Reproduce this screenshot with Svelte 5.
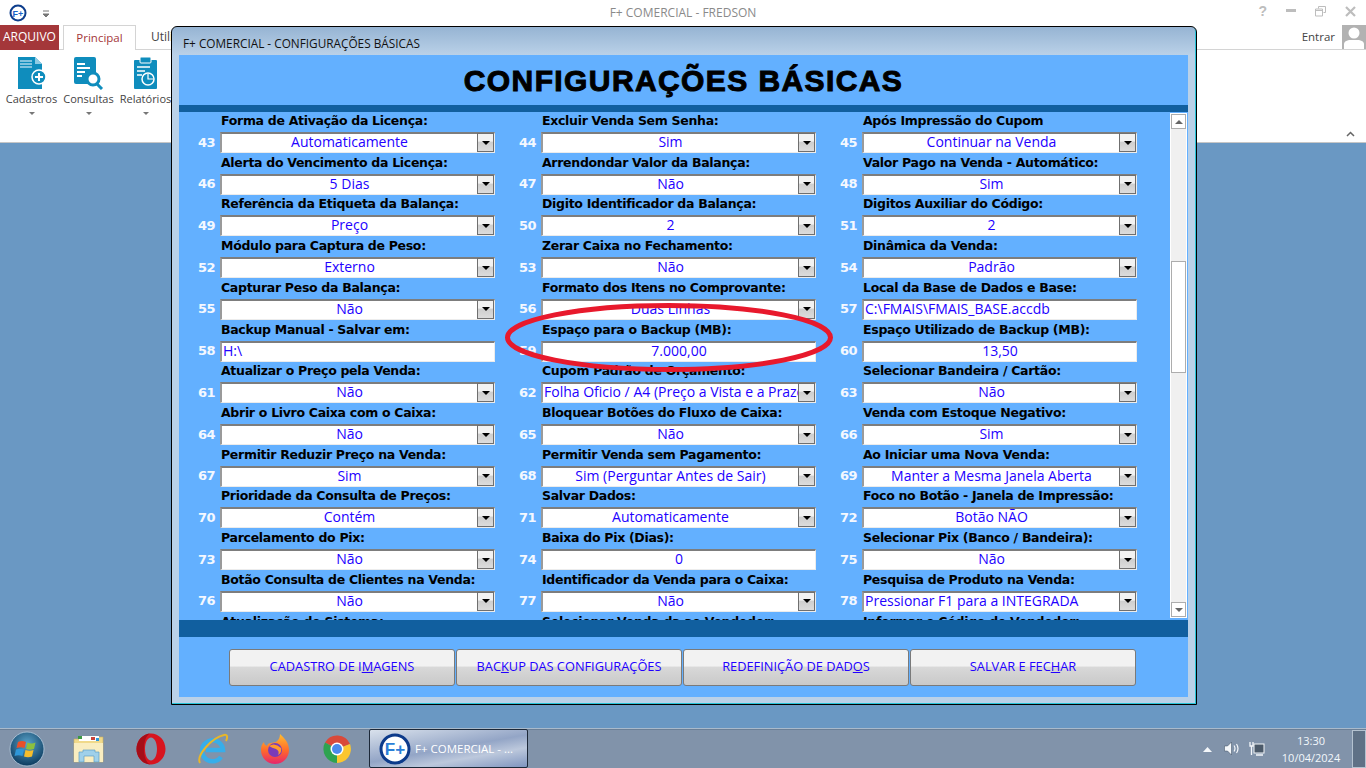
<script>
    const fields = [
        [43, 'Forma de Ativação da Licença:', 'Automaticamente', 'c'],
        [44, 'Excluir Venda Sem Senha:', 'Sim', 'c'],
        [45, 'Após Impressão do Cupom', 'Continuar na Venda', 'c'],
        [46, 'Alerta do Vencimento da Licença:', '5 Dias', 'c'],
        [47, 'Arrendondar Valor da Balança:', 'Não', 'c'],
        [48, 'Valor Pago na Venda - Automático:', 'Sim', 'c'],
        [49, 'Referência da Etiqueta da Balança:', 'Preço', 'c'],
        [50, 'Digito Identificador da Balança:', '2', 'c'],
        [51, 'Digitos Auxiliar do Código:', '2', 'c'],
        [52, 'Módulo para Captura de Peso:', 'Externo', 'c'],
        [53, 'Zerar Caixa no Fechamento:', 'Não', 'c'],
        [54, 'Dinâmica da Venda:', 'Padrão', 'c'],
        [55, 'Capturar Peso da Balança:', 'Não', 'c'],
        [56, 'Formato dos Itens no Comprovante:', 'Duas Linhas', 'c'],
        [57, 'Local da Base de Dados e Base:', 'C:\\FMAIS\\FMAIS_BASE.accdb', 'tl'],
        [58, 'Backup Manual - Salvar em:', 'H:\\', 'tl'],
        [59, 'Espaço para o Backup (MB):', '7.000,00', 't'],
        [60, 'Espaço Utilizado de Backup (MB):', '13,50', 't'],
        [61, 'Atualizar o Preço pela Venda:', 'Não', 'c'],
        [62, 'Cupom Padrão de Orçamento:', 'Folha Oficio / A4 (Preço a Vista e a Prazo)', 'cl'],
        [63, 'Selecionar Bandeira / Cartão:', 'Não', 'c'],
        [64, 'Abrir o Livro Caixa com o Caixa:', 'Não', 'c'],
        [65, 'Bloquear Botões do Fluxo de Caixa:', 'Não', 'c'],
        [66, 'Venda com Estoque Negativo:', 'Sim', 'c'],
        [67, 'Permitir Reduzir Preço na Venda:', 'Sim', 'c'],
        [68, 'Permitir Venda sem Pagamento:', 'Sim (Perguntar Antes de Sair)', 'c'],
        [69, 'Ao Iniciar uma Nova Venda:', 'Manter a Mesma Janela Aberta', 'c'],
        [70, 'Prioridade da Consulta de Preços:', 'Contém', 'c'],
        [71, 'Salvar Dados:', 'Automaticamente', 'c'],
        [72, 'Foco no Botão - Janela de Impressão:', 'Botão NÃO', 'c'],
        [73, 'Parcelamento do Pix:', 'Não', 'c'],
        [74, 'Baixa do Pix (Dias):', '0', 't'],
        [75, 'Selecionar Pix (Banco / Bandeira):', 'Não', 'c'],
        [76, 'Botão Consulta de Clientes na Venda:', 'Não', 'c'],
        [77, 'Identificador da Venda para o Caixa:', 'Não', 'c'],
        [78, 'Pesquisa de Produto na Venda:', 'Pressionar F1 para a INTEGRADA', 'cl'],
        [79, 'Atualização do Sistema:', 'Não', 'c'],
        [80, 'Selecionar Venda da ao Vendedor:', 'Não', 'c'],
        [81, 'Informar o Código de Vendedor:', 'Não', 'c']
    ];

    const buttons = [
        ['CADASTRO DE I', 'M', 'AGENS'],
        ['BAC', 'K', 'UP DAS CONFIGURAÇÕES'],
        ['REDEFINIÇÃO DE DAD', 'O', 'S'],
        ['SALVAR E FEC', 'H', 'AR']
    ];
</script>

<div class="screen">
    <div class="titlebar">
        <div class="qat">
            <svg width="18" height="18" viewBox="0 0 18 18">
                <circle cx="9" cy="9" r="7.5" fill="#fff" stroke="#0d3d8c" stroke-width="2" />
                <text x="9" y="12.5" text-anchor="middle" class="fplus-small">F+</text>
            </svg>
            <svg class="qat-arrow" width="8" height="8" viewBox="0 0 8 8">
                <path d="M1 1h6M1 4h6L4 7z" fill="#777" stroke="#777" stroke-width="1" />
            </svg>
        </div>
        <div class="apptitle">F+ COMERCIAL - FREDSON</div>
        <div class="winctl">
            <span class="help">?</span>
            <svg width="10" height="4" viewBox="0 0 10 4"><rect y="0" width="10" height="3" fill="#bdbdbd" /></svg>
            <svg width="11" height="11" viewBox="0 0 11 11"><path d="M3.5 2.5v-2h7v6h-2M.5 3h7v7h-7zM.5 4.500h7" fill="none" stroke="#bdbdbd" /></svg>
            <svg width="11" height="11" viewBox="0 0 11 11"><path d="M1 1l9 9M10 1l-9 9" stroke="#bdbdbd" stroke-width="2.200" /></svg>
        </div>
    </div>

    <div class="tabs">
        <div class="tab-file">ARQUIVO</div>
        <div class="tab-active">Principal</div>
        <div class="tab">Utilitários</div>
        <div class="signin">
            <span>Entrar</span>
            <div class="avatar">
                <svg width="24" height="24" viewBox="0 0 24 24">
                    <circle cx="12" cy="8" r="5.500" fill="#fff" />
                    <path d="M2 24v-5q0-3 5-4h10q5 1 5 4v5z" fill="#fff" />
                </svg>
            </div>
        </div>
    </div>

    <div class="ribbon">
        <div class="rbtn">
            <svg width="30" height="34" viewBox="0 0 30 34">
                <path d="M1 1h17l7 7v25H1z" fill="#0f8dbd" />
                <path d="M18 1l7 7h-7z" fill="#8fcbe3" />
                <path d="M3 5h12M3 8h12M3 11h12" stroke="#a9d6ea" stroke-width="1.500" />
                <circle cx="22" cy="21" r="7" fill="#0f8dbd" stroke="#fff" stroke-width="1.500" />
                <path d="M18 21h8M22 17v8" stroke="#fff" stroke-width="2" />
            </svg>
            <span>Cadastros</span>
            <i class="caret"></i>
        </div>
        <div class="rbtn">
            <svg width="32" height="34" viewBox="0 0 32 34">
                <rect x="1" y="1" width="22" height="27" rx="2" fill="#0f8dbd" />
                <path d="M4 8h8M4 12h13M4 16h8M4 20h5" stroke="#fff" stroke-width="2" />
                <circle cx="20" cy="23" r="6" fill="#fff" stroke="#0f8dbd" stroke-width="3" />
                <path d="M24 28l5 5" stroke="#0f8dbd" stroke-width="3" />
            </svg>
            <span>Consultas</span>
            <i class="caret"></i>
        </div>
        <div class="rbtn">
            <svg width="26" height="34" viewBox="0 0 26 34">
                <rect x="1" y="4" width="23" height="29" rx="1" fill="#0f8dbd" />
                <rect x="7" y="1" width="11" height="6" rx="1" fill="#0f8dbd" stroke="#fff" />
                <path d="M4 11h13M4 15h8M4 19h5" stroke="#fff" stroke-width="1.500" />
                <circle cx="15" cy="23" r="6" fill="#0f8dbd" stroke="#fff" stroke-width="1.500" />
                <path d="M15 18v5h5" fill="none" stroke="#fff" stroke-width="1.200" />
            </svg>
            <span>Relatórios</span>
            <i class="caret"></i>
        </div>
        <svg class="collapse" width="9" height="6" viewBox="0 0 9 6"><path d="M1 5l3.500-3.500L8 5" fill="none" stroke="#666" stroke-width="1.500" /></svg>
    </div>

    <div class="desktop"></div>

    <div class="taskbar">
        <div class="orb">
            <svg width="36" height="36" viewBox="0 0 36 36">
                <defs>
                    <radialGradient id="orbfill" cx="50%" cy="35%" r="65%">
                        <stop offset="0" stop-color="#5aa5cc" />
                        <stop offset="1" stop-color="#0c3a5e" />
                    </radialGradient>
                </defs>
                <circle cx="18" cy="18" r="17" fill="url(#orbfill)" stroke="#b8cde0" stroke-width="0.800" />
                <path d="M9 11q4-2 8 0l-1.500 6q-4-1.500-8 0z" fill="#e8502a" />
                <path d="M18.500 11.500q4 2 8 0l-1.500 6.500q-4 1.500-8 0z" fill="#8cc03e" />
                <path d="M7 18.500q4-1.500 8 0l-1.500 6.500q-4-1.500-8 0z" fill="#2f97d8" />
                <path d="M16.500 19q4 1.500 8 0l-1.500 6.500q-4 1.500-8 0z" fill="#f6bd2b" />
            </svg>
        </div>
        <div class="tbicon">
            <svg width="32" height="32" viewBox="0 0 32 32">
                <path d="M1 6h12l2-2h15v25H1z" fill="#f0d98a" stroke="#c9ae62" stroke-width="0.600" />
                <path d="M6 3h20v5H6z" fill="#fff" />
                <path d="M5 3h4v3H5z" fill="#3c9a45" /><path d="M18 4h4v3h-4z" fill="#c9433a" /><path d="M23 5h3v3h-3z" fill="#2f97d8" />
                <path d="M1 10h29v19H1z" fill="#f9edc0" />
                <path d="M6 29V19h4v-2h12v2h4v10h-5v-6H11v6z" fill="#9fd0ea" stroke="#5f9fc4" stroke-width="0.700" />
            </svg>
        </div>
        <div class="tbicon">
            <svg width="32" height="32" viewBox="0 0 32 32">
                <path d="M16 .5C8 .5 1.500 7.500 1.500 16S8 31.500 16 31.500 30.500 24.500 30.500 16 24 .5 16 .5zM16 4.500c3.500 0 6 5 6 11.500s-2.500 11.500-6 11.500-6-5-6-11.500S12.500 4.500 16 4.500z" fill="#d8141f" fill-rule="evenodd" />
                <path d="M16 .5C8 .5 1.500 7.500 1.500 16S8 31.500 16 31.500c-4 0-7-7-7-15.500S12 .5 16 .5z" fill="#a50d18" />
            </svg>
        </div>
        <div class="tbicon">
            <svg width="32" height="32" viewBox="0 0 32 32">
                <path d="M9 17h17A10.500 10.500 0 1 0 24 24" fill="none" stroke="#37aeea" stroke-width="4.500" />
                <path d="M3 30C-1 23 14 5 27 2c4-1 3.500 3 2 6" fill="none" stroke="#e8b62a" stroke-width="2" />
            </svg>
        </div>
        <div class="tbicon">
            <svg width="32" height="32" viewBox="0 0 32 32">
                <defs>
                    <linearGradient id="foxfill" x1="0.500" y1="0" x2="0.500" y2="1">
                        <stop offset="0" stop-color="#ffbd2e" />
                        <stop offset="0.550" stop-color="#ff6a2a" />
                        <stop offset="1" stop-color="#e6246e" />
                    </linearGradient>
                </defs>
                <path d="M21 1c4 4 9 8 9 16a14 14 0 0 1-28 0c0-4 1-6 3-8 0 2 1 3 3 4 1-4 6-3 9-4 3-2 4-5 4-8z" fill="url(#foxfill)" />
                <circle cx="16" cy="17" r="7" fill="#7b3bb8" />
                <path d="M10 13q6-4 12 2 1 5-3 7 2-4-2-6-4-1-7-3z" fill="#ff9a2e" />
            </svg>
        </div>
        <div class="tbicon">
            <svg width="30" height="30" viewBox="0 0 30 30">
                <path d="M15 15L3 8.500A14 14 0 0 1 28 10z" fill="#d9493a" />
                <path d="M15 15l13-5a14 14 0 0 1-13 19z" fill="#fbc62f" />
                <path d="M15 15v14A14 14 0 0 1 3 8.500z" fill="#2ea350" />
                <circle cx="15" cy="15" r="6.500" fill="#fff" />
                <circle cx="15" cy="15" r="5" fill="#4b8bec" />
            </svg>
        </div>
        <div class="tbtask">
            <svg width="32" height="32" viewBox="0 0 32 32">
                <circle cx="16" cy="16" r="14" fill="#fff" stroke="#0c3a8a" stroke-width="3" />
                <text x="16" y="22" text-anchor="middle" class="fplus-big">F+</text>
            </svg>
            <span>F+ COMERCIAL - ...</span>
        </div>
        <div class="tray">
            <svg class="t-arrow" width="9" height="6" viewBox="0 0 9 6"><path d="M0 6l4.500-5L9 6z" fill="#f4f7fa" /></svg>
            <svg class="t-vol" width="16" height="15" viewBox="0 0 16 15">
                <path d="M0.500 5h3l4-4v13l-4-4h-3z" fill="#f4f7fa" stroke="#38495c" stroke-width="0.500" />
                <path d="M10 4.500q2 3 0 6M12.500 3q3 4.500 0 9" fill="none" stroke="#f4f7fa" stroke-width="1.200" />
            </svg>
            <svg class="t-net" width="16" height="16" viewBox="0 0 16 16">
                <rect x="5" y="3" width="10" height="9" fill="#4b5a6a" stroke="#f4f7fa" />
                <path d="M7 14h7" stroke="#f4f7fa" stroke-width="1.500" />
                <path d="M1 1v4h3V1M2.500 5v9" fill="none" stroke="#f4f7fa" stroke-width="1.300" />
            </svg>
            <div class="clock"><span>13:30</span><span>10/04/2024</span></div>
            <div class="showdesk"></div>
        </div>
    </div>

    <div class="window">
        <div class="wintitle">F+ COMERCIAL - CONFIGURAÇÕES BÁSICAS</div>
        <div class="client">
            <h1>CONFIGURAÇÕES BÁSICAS</h1>
            <div class="bar thin"></div>
            <div class="scrollarea">
                <div class="grid">
                    {#each fields as [num, label, value, kind]}
                        <div class="cell">
                            <div class="lbl">{label}</div>
                            <div class="line">
                                <div class="num">{num}</div>
                                <div class="field" class:left={kind.includes('l')}>
                                    <span class="val">{value}</span>
                                    {#if kind[0] === 'c'}
                                        <div class="drop"><i></i></div>
                                    {/if}
                                </div>
                            </div>
                        </div>
                    {/each}
                </div>
                <div class="scrollbar">
                    <div class="sbtn"><i class="up"></i></div>
                    <div class="track"><div class="thumb"></div></div>
                    <div class="sbtn"><i class="down"></i></div>
                </div>
            </div>
            <div class="bar thick"></div>
            <div class="footer">
                {#each buttons as [a, key, b]}
                    <div class="fbtn">{a}<u>{key}</u>{b}</div>
                {/each}
            </div>
        </div>
    </div>

    <svg class="circle" width="340" height="80" viewBox="0 0 340 80">
        <ellipse cx="169" cy="36.500" rx="161.500" ry="32" fill="none" stroke="#e8192c" stroke-width="5" />
    </svg>
</div>

<style>
    :global(body) {
        margin: 0;
        overflow: hidden;
    }
    .screen {
        position: relative;
        width: 1366px;
        height: 768px;
        display: flex;
        flex-direction: column;
        overflow: hidden;
        font-family: "Open Sans", "Liberation Sans", sans-serif;
        background: #fff;
    }
    .titlebar {
        height: 25px;
        display: flex;
        align-items: center;
        position: relative;
        flex: none;
    }
    .qat {
        display: flex;
        align-items: center;
        gap: 15px;
        padding-left: 9px;
    }
    .qat-arrow {
        margin-top: 2px;
    }
    .fplus-small {
        font: bold 9px "Liberation Sans", sans-serif;
        fill: #1b63c8;
    }
    .fplus-big {
        font: bold 17px "Liberation Sans", sans-serif;
        fill: #2b7fd8;
    }
    .apptitle {
        position: absolute;
        left: 0;
        right: 0;
        top: 4px;
        text-align: center;
        font-size: 12px;
        color: #8a8a8a;
    }
    .winctl {
        margin-left: auto;
        display: flex;
        align-items: center;
        gap: 19px;
        padding: 0 10px 3px 0;
        position: relative;
    }
    .help {
        font: bold 14px "Liberation Sans", sans-serif;
        color: #bdbdbd;
    }
    .tabs {
        height: 25px;
        display: flex;
        flex: none;
        box-sizing: border-box;
        border-bottom: 1px solid #d4d4d4;
        font-size: 12px;
    }
    .tab-file {
        width: 59px;
        height: 25px;
        background: #a4373a;
        color: #fff;
        text-align: center;
        line-height: 24px;
        box-sizing: border-box;
    }
    .tab-active {
        width: 73px;
        height: 25px;
        box-sizing: border-box;
        margin-left: 4px;
        border: 1px solid #d4d4d4;
        border-bottom: 0;
        background: #fff;
        color: #a4373a;
        text-align: center;
        line-height: 24px;
        font-size: 11.500px;
    }
    .tab {
        padding-left: 15px;
        line-height: 24px;
        color: #444;
    }
    .signin {
        margin-left: auto;
        display: flex;
        gap: 7px;
        color: #444;
        line-height: 24px;
        font-size: 11.500px;
    }
    .avatar {
        width: 24px;
        height: 24px;
        background: #b2b2b2;
    }
    .ribbon {
        height: 93px;
        flex: none;
        box-sizing: border-box;
        border-bottom: 1px solid #c6c6c6;
        display: flex;
        padding-left: 3px;
        position: relative;
        font-size: 11px;
        color: #444;
    }
    .rbtn {
        width: 57px;
        display: flex;
        flex-direction: column;
        align-items: center;
        padding-top: 6px;
    }
    .rbtn span {
        margin-top: 1px;
        white-space: nowrap;
        line-height: 16px;
    }
    .caret {
        margin-top: 5px;
        border: 3px solid transparent;
        border-top: 3px solid #777;
        border-left-width: 3.500px;
        border-right-width: 3.500px;
    }
    .collapse {
        position: absolute;
        right: 11px;
        bottom: 5px;
    }
    .desktop {
        flex: 1;
        background: #6a98c3;
    }
    .taskbar {
        height: 40px;
        flex: none;
        box-sizing: border-box;
        border-top: 1px solid #a9bacb;
        background: #8193aa;
        box-shadow: inset 0 1px 0 #6b7f96;
        display: flex;
        align-items: center;
        padding-left: 9px;
    }
    .orb {
        width: 36px;
        height: 36px;
        margin-right: 13px;
    }
    .tbicon {
        width: 62px;
        height: 32px;
        display: flex;
        align-items: center;
        justify-content: center;
    }
    .tbtask {
        width: 159px;
        height: 39px;
        box-sizing: border-box;
        margin-left: 1px;
        border: 1px solid #1c2838;
        border-radius: 2px;
        background: linear-gradient(170deg, #d9e1ec 0%, #93a5c6 50%, #bcc8dc 70%, #7f95bf 100%);
        display: flex;
        align-items: center;
        gap: 4px;
        padding-left: 9px;
        color: #fff;
        font-size: 11.500px;
        white-space: nowrap;
    }
    .tray {
        margin-left: auto;
        display: flex;
        align-items: center;
        height: 100%;
        color: #f2f7fb;
    }
    .t-arrow {
        margin-right: 12px;
    }
    .t-vol {
        margin-right: 9px;
    }
    .t-net {
        margin-right: 7px;
    }
    .clock {
        width: 78px;
        margin-right: 2px;
        display: flex;
        flex-direction: column;
        align-items: center;
        font-size: 11px;
        line-height: 17px;
    }
    .showdesk {
        width: 14px;
        height: 38px;
        box-sizing: border-box;
        border: 1px solid #b4c2d0;
        background: #5f7186;
    }
    .window {
        position: absolute;
        left: 171px;
        top: 26px;
        width: 1026px;
        height: 679px;
        box-sizing: border-box;
        border: 1px solid #000;
        border-radius: 6px 6px 0 0;
        box-shadow: inset -1px -1px 0 #27c4d8;
        background: linear-gradient(#96b4d3 0, #bad1e8 28px);
        padding: 0 8px 7px 7px;
        display: flex;
        flex-direction: column;
    }
    .wintitle {
        height: 28px;
        flex: none;
        line-height: 33px;
        padding-left: 4px;
        font-size: 11.800px;
        color: #111;
    }
    .client {
        flex: 1;
        display: flex;
        flex-direction: column;
        background: #63b0ff;
        min-height: 0;
    }
    h1 {
        margin: 0;
        height: 50px;
        flex: none;
        text-align: center;
        font: 900 30px/52px "Liberation Sans", sans-serif;
        -webkit-text-stroke: 1px #000;
        letter-spacing: 1.400px;
        color: #000;
    }
    .bar {
        background: #115f9f;
        flex: none;
    }
    .thin {
        height: 7px;
    }
    .thick {
        height: 17px;
    }
    .scrollarea {
        height: 508px;
        flex: none;
        overflow: hidden;
        position: relative;
    }
    .grid {
        display: grid;
        grid-template-columns: repeat(3, 321px);
        grid-auto-rows: 41.730px;
        padding-left: 8px;
    }
    .lbl {
        height: 20px;
        padding-left: 34px;
        font: bold 12.500px/17px "DejaVu Sans", sans-serif;
        letter-spacing: -0.3px;
        color: #000;
        white-space: nowrap;
    }
    .line {
        display: flex;
        align-items: center;
    }
    .num {
        width: 28px;
        margin-right: 5px;
        padding-bottom: 1px;
        text-align: right;
        font: bold 13px "DejaVu Sans", sans-serif;
        letter-spacing: -0.5px;
        color: #f4f8ff;
    }
    .field {
        position: relative;
        width: 275px;
        height: 21px;
        box-sizing: border-box;
        background: #fff;
        border-top: 2px solid #7d7d7d;
        border-left: 2px solid #9a9a9a;
        border-right: 1px solid #ececec;
        border-bottom: 1px solid #ececec;
        display: flex;
        justify-content: center;
        color: #2200ff;
        font-size: 14px;
        line-height: 16px;
        white-space: nowrap;
    }
    .field:has(.drop) {
        padding-right: 17px;
    }
    .field.left {
        justify-content: flex-start;
        padding-left: 1px;
    }
    .drop {
        position: absolute;
        right: 0;
        top: -1px;
        width: 17px;
        height: 19px;
        box-sizing: border-box;
        border: 1px solid #6f6f6f;
        background: linear-gradient(#f2f2f2 40%, #cfcfcf 50%, #dcdcdc);
        display: flex;
        align-items: center;
        justify-content: center;
    }
    .drop i {
        border-top: 4px solid #000;
        border-left: 4px solid transparent;
        border-right: 4px solid transparent;
    }
    .scrollbar {
        position: absolute;
        right: 1px;
        top: 1px;
        width: 17px;
        height: 505px;
        box-sizing: border-box;
        background: #f0f0f0;
        border: 1px solid #fff;
        display: flex;
        flex-direction: column;
    }
    .sbtn {
        height: 15px;
        flex: none;
        box-sizing: border-box;
        border: 1px solid #adadad;
        background: #fff;
        display: flex;
        align-items: center;
        justify-content: center;
    }
    .up {
        border-bottom: 4px solid #666;
        border-left: 4px solid transparent;
        border-right: 4px solid transparent;
    }
    .down {
        border-top: 4px solid #666;
        border-left: 4px solid transparent;
        border-right: 4px solid transparent;
    }
    .track {
        flex: 1;
        padding-top: 132px;
    }
    .thumb {
        height: 112px;
        box-sizing: border-box;
        border: 1px solid #adadad;
        background: #fff;
    }
    .footer {
        flex: 1;
        display: flex;
        gap: 1px;
        padding: 12px 0 0 50px;
    }
    .fbtn {
        width: 226px;
        height: 37px;
        box-sizing: border-box;
        border: 1px solid #7a7a7a;
        border-radius: 3px;
        background: linear-gradient(#f2f2f2 45%, #d8d8d8 50%, #c9c9c9);
        text-align: center;
        line-height: 33px;
        font-size: 12.800px;
        color: #2200ff;
    }
    .circle {
        position: absolute;
        left: 500px;
        top: 301px;
    }
</style>
